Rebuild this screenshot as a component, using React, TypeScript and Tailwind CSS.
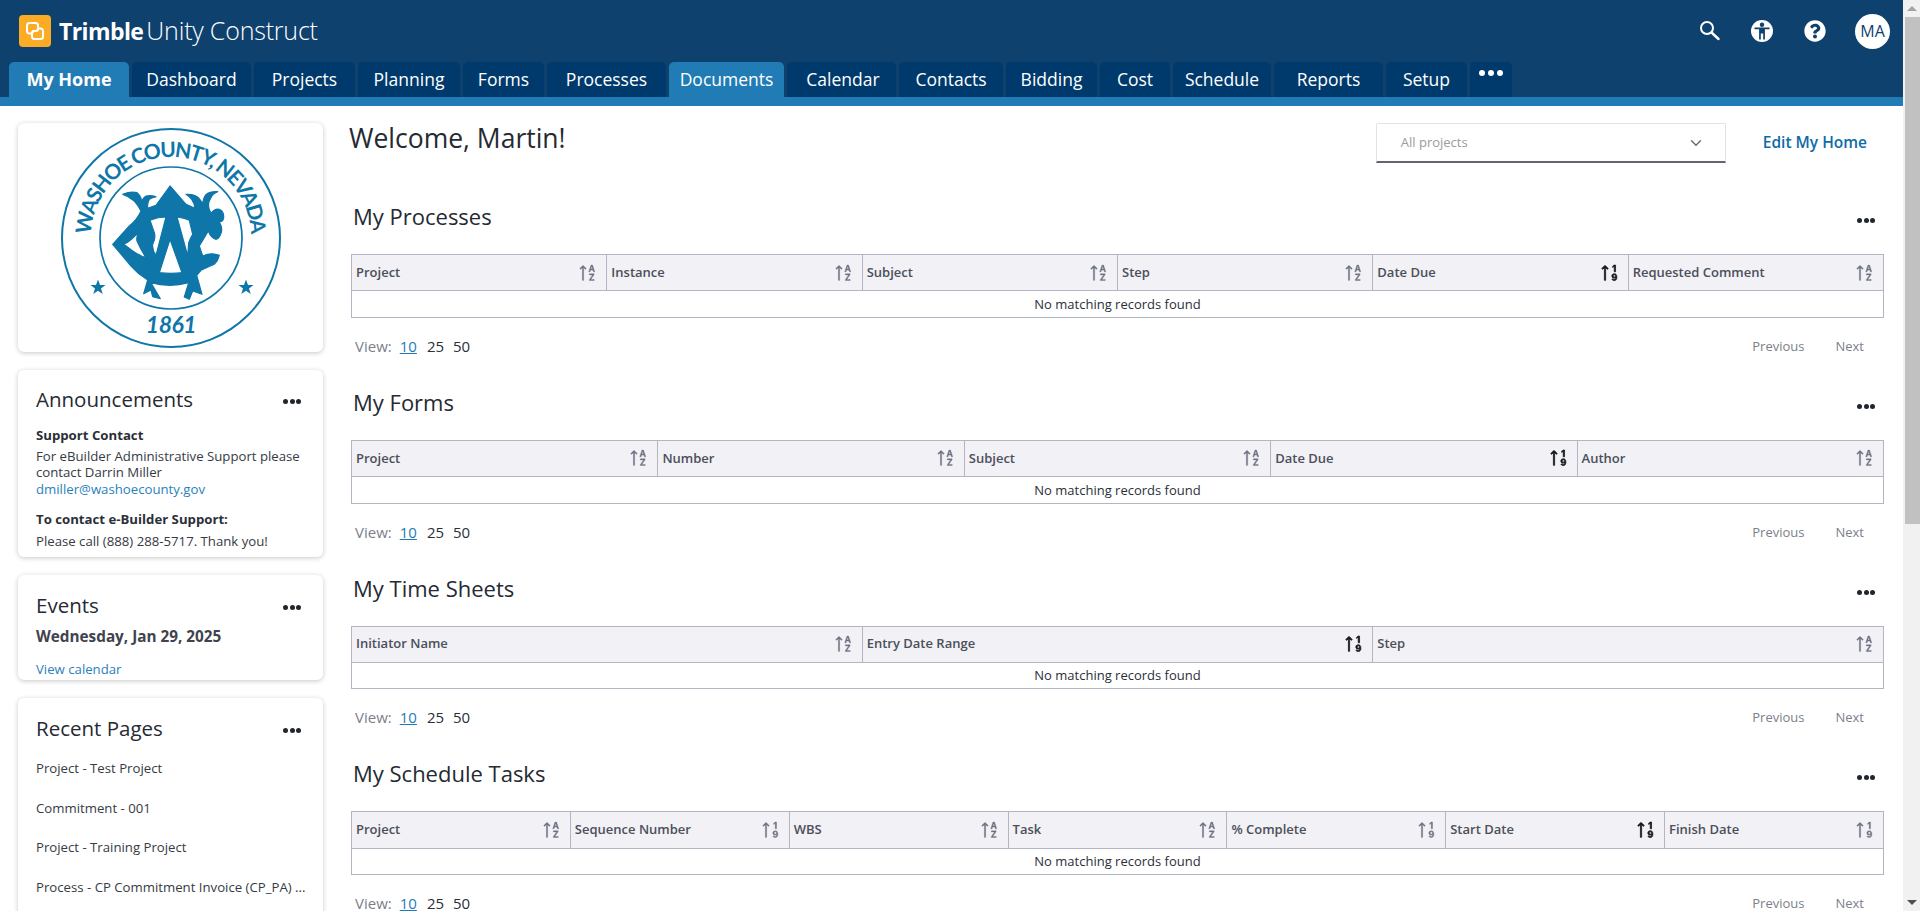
import React from "react";
import { ChevronDown } from "lucide-react";
import { BsSortAlphaUp, BsSortNumericUp } from "react-icons/bs";
import { FaQuestionCircle } from "react-icons/fa";

const tabs = [
  { label: "My Home", w: "w-[120px]", active: "home" },
  { label: "Dashboard", w: "w-[119px]" },
  { label: "Projects", w: "w-[101px]" },
  { label: "Planning", w: "w-[102px]" },
  { label: "Forms", w: "w-[81px]" },
  { label: "Processes", w: "w-[119px]" },
  { label: "Documents", w: "w-[115px]", active: "docs" },
  { label: "Calendar", w: "w-[109px] pl-[3px]" },
  { label: "Contacts", w: "w-[104px]" },
  { label: "Bidding", w: "w-[91px]" },
  { label: "Cost", w: "w-[70px]" },
  { label: "Schedule", w: "w-[98px]" },
  { label: "Reports", w: "w-[109px]" },
  { label: "Setup", w: "w-[81px]" },
];

type Col = { name: string; numeric?: boolean; sorted?: boolean };

const sections: { title: string; cols: Col[] }[] = [
  {
    title: "My Processes",
    cols: [
      { name: "Project" },
      { name: "Instance" },
      { name: "Subject" },
      { name: "Step" },
      { name: "Date Due", numeric: true, sorted: true },
      { name: "Requested Comment" },
    ],
  },
  {
    title: "My Forms",
    cols: [
      { name: "Project" },
      { name: "Number" },
      { name: "Subject" },
      { name: "Date Due", numeric: true, sorted: true },
      { name: "Author" },
    ],
  },
  {
    title: "My Time Sheets",
    cols: [
      { name: "Initiator Name" },
      { name: "Entry Date Range", numeric: true, sorted: true },
      { name: "Step" },
    ],
  },
  {
    title: "My Schedule Tasks",
    cols: [
      { name: "Project" },
      { name: "Sequence Number", numeric: true },
      { name: "WBS" },
      { name: "Task" },
      { name: "% Complete", numeric: true },
      { name: "Start Date", numeric: true, sorted: true },
      { name: "Finish Date", numeric: true },
    ],
  },
];

const recentPages = [
  "Project - Test Project",
  "Commitment - 001",
  "Project - Training Project",
  "Process - CP Commitment Invoice (CP_PA) ...",
];

const Dots = () => (
  <div className="flex gap-[1.5px]">
    <span className="w-[5px] h-[5px] rounded-full bg-[#20252e]" />
    <span className="w-[5px] h-[5px] rounded-full bg-[#20252e]" />
    <span className="w-[5px] h-[5px] rounded-full bg-[#20252e]" />
  </div>
);

const LogoMark = () => (
  <svg width="32" height="32" viewBox="0 0 32 32" className="shrink-0">
    <rect width="32" height="32" rx="4" fill="#fbab24" />
    <path
      d="M13.5 18.5H10.5a2.5 2.5 0 0 1-2.5-2.5V10.5A2.5 2.5 0 0 1 10.5 8h6a2.5 2.5 0 0 1 2.5 2.5V13.5a2.5 2.5 0 0 1-2.5 2.5H15.5a2.5 2.5 0 0 0-2.5 2.5"
      fill="none"
      stroke="#fff"
      strokeWidth="2"
    />
    <path
      d="M18.5 13.5h3a2.5 2.5 0 0 1 2.5 2.5v5.5a2.5 2.5 0 0 1-2.5 2.5h-6a2.5 2.5 0 0 1-2.5-2.5V18.5a2.5 2.5 0 0 1 2.5-2.5h1a2.5 2.5 0 0 0 2.5-2.5"
      fill="none"
      stroke="#fff"
      strokeWidth="2"
    />
  </svg>
);

const SearchIcon = () => (
  <svg width="22" height="22" viewBox="0 0 22 22" fill="none" stroke="#fff">
    <circle cx="9" cy="8" r="6" strokeWidth="2" />
    <path d="M13.5 12.5L20.5 19" strokeWidth="2.4" strokeLinecap="round" />
  </svg>
);

const AccessIcon = () => (
  <svg width="22" height="22" viewBox="0 0 22 22">
    <circle cx="11" cy="11" r="11" fill="#fff" />
    <circle cx="11" cy="4.800" r="2.200" fill="#0f416e" />
    <path
      d="M3.500 7.600h15v1.700h-4.600V19.500h-1.700v-6h-2.400v6H8.100V9.300H3.500z"
      fill="#0f416e"
    />
  </svg>
);

const Seal = () => (
  <svg width="224" height="224" viewBox="-112 -112 224 224">
    <defs>
      <path id="seal-arc" d="M-80 -1A80 80 0 1 1 80 -1" />
    </defs>
    <circle r="109" fill="none" stroke="#0e76a8" strokeWidth="2" />
    <circle r="71" fill="none" stroke="#0e76a8" strokeWidth="1.700" />
    <text fill="#0e76a8" fontFamily="Lato, sans-serif" fontSize="21" fontWeight="700">
      <textPath href="#seal-arc" startOffset="50%" textAnchor="middle" textLength="246">
        WASHOE COUNTY, NEVADA
      </textPath>
    </text>
    <text
      x="0"
      y="95"
      textAnchor="middle"
      fill="#0e76a8"
      fontFamily="Lato, sans-serif"
      fontSize="23"
      fontWeight="700"
      fontStyle="italic"
      letterSpacing="-0.5"
    >
      1861
    </text>
    <path
      fillRule="evenodd"
      fill="#0e76a8"
      stroke="#0e76a8"
      strokeWidth="1.200"
      strokeLinejoin="round"
      d="M-1 -52L15 -33.700L24 -29.700Q23 -39 15 -43.700Q25 -44 28.300 -39.300Q31 -36 31.700 -32.700Q32 -42 36.700 -44.700Q41 -47 46.700 -46.300Q41 -44 40 -40.300Q35 -33 40 -24.700Q44 -30 48.300 -28.700Q53 -27 52.700 -20.300Q52 -16 48.300 -16.300Q52 -10 50 -4.700Q48 1 45 1.300Q40 0 37.300 -7L33.300 -0.300L28.300 8L31.700 18Q40 14 48.300 17.300Q47 23 43.300 26.300Q37 29 30 32.300L25.700 37.300L31 56.300L21.700 53L18.300 61.300L13.300 59L17.700 44.700Q8 47.300 -1 47.300Q-11 47.300 -20 44.700L-10.700 60.700L-18.300 58.700L-20 52L-27.300 55.700L-23.300 42Q-33 36 -40 28L-58.300 6.300L-41.700 -12Q-34 -18 -30 -27Q-33 -33 -36.700 -37Q-42 -42 -48.300 -43.700Q-40 -47 -34 -45.300Q-30 -42 -29.300 -37Q-27 -41 -25 -42Q-20 -43 -15 -41.300Q-20 -40 -21.700 -38.700Q-24 -34 -23.300 -29.700L-15 -32.700Z M-47.300 6.300Q-40 3 -31.700 -7Q-35 -2 -34 3Q-30 12 -25 19.700Q-33 17 -38.300 13Z M-21 -17.700Q-13 -21 -5 -21L-15 17.300Q-19 12 -18.300 6.300Q-15 0 -16.700 -5.300Z M6 -21Q13 -20 18.300 -17.700L21.700 -3.700Q19 1 17.700 4.700L16.700 18Z M-1 1.300L11 34.700Q0 36 -11.700 34.700Z"
    />
    <polygon
      fill="#0e76a8"
      points="-73,41.500 -71,47 -65.500,47 -70,50.500 -68.300,56 -73,52.800 -77.700,56 -76,50.500 -80.500,47 -75,47"
    />
    <polygon
      fill="#0e76a8"
      points="75,41.500 77,47 82.500,47 78,50.500 79.700,56 75,52.800 70.300,56 72,50.500 67.500,47 73,47"
    />
  </svg>
);

const Card = ({ title, className, children }: { title: string; className: string; children: React.ReactNode }) => (
  <div className={`bg-white rounded-md shadow-[0_1px_5px_rgba(0,0,0,0.22)] px-[18px] ${className}`}>
    <div className="flex items-center justify-between h-[26px] pr-[4px]">
      <h3 className="text-[20.500px] leading-[26px] font-medium text-[#252a33]">{title}</h3>
      <div className="mt-[5px]">
        <Dots />
      </div>
    </div>
    {children}
  </div>
);

const Sidebar = () => (
  <aside className="w-[305px] shrink-0 flex flex-col gap-[18px] ml-[18px] pt-[17px]">
    <div className="bg-white rounded-md shadow-[0_1px_5px_rgba(0,0,0,0.22)] h-[229px] shrink-0 flex items-center justify-center">
      <Seal />
    </div>
    <Card title="Announcements" className="h-[187px] shrink-0 pt-[16px] text-[13.200px] leading-[16.500px] text-[#363a45]">
      <p className="font-bold mt-[15px] text-[#2b2f38]">Support Contact</p>
      <p className="mt-[4px]">For eBuilder Administrative Support please contact Darrin Miller</p>
      <a className="block text-[#2a7fba]">dmiller@washoecounty.gov</a>
      <p className="font-bold mt-[14px] text-[#2b2f38]">To contact e-Builder Support:</p>
      <p className="mt-[5px]">Please call (888) 288-5717. Thank you!</p>
    </Card>
    <Card title="Events" className="h-[105px] shrink-0 pt-[17px]">
      <p className="text-[15.300px] leading-[20px] font-bold text-[#3f434e] mt-[8px]">Wednesday, Jan 29, 2025</p>
      <a className="block mt-[15px] text-[13.200px] leading-[16px] text-[#2a7fba]">View calendar</a>
    </Card>
    <Card title="Recent Pages" className="flex-1 pt-[17px]">
      <ul className="mt-[19px] flex flex-col text-[13.200px] leading-[16px] text-[#363a45]">
        {recentPages.map((page) => (
          <li key={page} className="h-[39.500px] whitespace-nowrap">
            {page}
          </li>
        ))}
      </ul>
    </Card>
  </aside>
);

const DataTable = ({ title, cols }: { title: string; cols: Col[] }) => (
  <section>
    <div className="flex justify-between h-[50px] pl-[2px] pr-[9px]">
      <h2 className="text-[22px] leading-[24px] text-[#252a33]">{title}</h2>
      <div className="pt-[14px]">
        <Dots />
      </div>
    </div>
    <table className="w-full table-fixed border-collapse border border-[#b3b5c3]">
      <thead>
        <tr className="h-[36.300px] bg-[#f1f1f6]">
          {cols.map((col) => (
            <th key={col.name} className="border border-[#b3b5c3] p-0 pl-[4px] pr-[8px] text-left font-semibold">
              <div className="flex items-center justify-between text-[13px] text-[#4b4f5a]">
                <span>{col.name}</span>
                {col.numeric ? (
                  <BsSortNumericUp
                    size={20}
                    className={
                      col.sorted
                        ? "text-[#14171c] stroke-current stroke-[0.6]"
                        : "text-[#6d7280] stroke-current stroke-[0.3]"
                    }
                  />
                ) : (
                  <BsSortAlphaUp size={20} className="text-[#6d7280] stroke-current stroke-[0.3]" />
                )}
              </div>
            </th>
          ))}
        </tr>
      </thead>
      <tbody>
        <tr className="h-[26.500px]">
          <td colSpan={cols.length} className="text-center text-[13px] text-[#2b2f38] p-0 pt-[1px]">
            No matching records found
          </td>
        </tr>
      </tbody>
    </table>
    <div className="flex justify-between h-[72px] pt-[19px] pl-[4px] pr-[20px] leading-[18px]">
      <div className="flex text-[15px]">
        <span className="text-[#7b7f8a]">View:</span>
        <a className="ml-[8px] text-[#1f7bb8] underline">10</a>
        <span className="ml-[10px] text-[#2b2f38]">25</span>
        <span className="ml-[9px] text-[#2b2f38]">50</span>
      </div>
      <div className="flex text-[13px] text-[#7b7f8a] gap-[31px]">
        <span>Previous</span>
        <span>Next</span>
      </div>
    </div>
  </section>
);

const App = () => {
  return (
    <div className="flex h-[911px] overflow-hidden bg-white font-['Open_Sans',sans-serif]">
      <div className="flex-1 min-w-0 flex flex-col">
        <header className="bg-[#0f416e] shrink-0">
          <div className="h-[62px] flex items-center justify-between pl-[19px] pr-[13px]">
            <div className="flex items-center gap-[8px] text-white">
              <LogoMark />
              <div className="flex items-baseline gap-[3px]">
                <span className="font-bold text-[23px] -tracking-[0.6px]">Trimble</span>
                <span className="font-light text-[25px] -tracking-[0.2px]">Unity Construct</span>
              </div>
            </div>
            <div className="flex items-center gap-[31px]">
              <SearchIcon />
              <AccessIcon />
              <FaQuestionCircle size={22} className="text-white" />
              <div className="w-[35px] h-[35px] -ml-[2px] rounded-full bg-white flex items-center justify-center text-[16px] font-medium text-[#0f416e]">
                MA
              </div>
            </div>
          </div>
          <nav className="flex gap-[3px] h-[35px] pl-[9px] text-[17.500px] leading-[35px] text-white">
            {tabs.map((tab) => (
              <a
                key={tab.label}
                className={`${tab.w} shrink-0 text-center rounded-t-[5px] ${
                  tab.active ? "bg-[#217cb5]" : "bg-[#003a6c]"
                } ${tab.active === "home" ? "font-bold text-[18px]" : ""}`}
              >
                {tab.label}
              </a>
            ))}
            <div className="w-[42px] h-[35px] shrink-0 rounded-t-[5px] bg-[#003a6c] flex justify-center gap-[3px] pt-[8px]">
              <span className="w-[6px] h-[6px] rounded-full bg-white" />
              <span className="w-[6px] h-[6px] rounded-full bg-white" />
              <span className="w-[6px] h-[6px] rounded-full bg-white" />
            </div>
          </nav>
          <div className="h-[9px] bg-[#217cb5]" />
        </header>

        <div className="flex flex-1 min-h-0 overflow-hidden">
          <Sidebar />
          <main className="flex-1 min-w-0 ml-[26px] pr-[19px] pt-[17px]">
            <div className="flex items-start justify-between h-[81px]">
              <h1 className="text-[26.500px] leading-[30px] text-[#252a33]">Welcome, Martin!</h1>
              <div className="flex items-start">
                <div className="w-[350px] h-[40px] flex items-center justify-between pl-[24px] pr-[20px] pt-[1px] border border-[#e2e2ea] border-b-2 border-b-[#62676f] rounded-t-[2px] text-[13px] text-[#9b9b9b]">
                  <span>All projects</span>
                  <ChevronDown size={18} className="text-[#6b6f78]" />
                </div>
                <a className="ml-[37px] mr-[17px] text-[15.500px] leading-[38px] font-semibold text-[#0e6ba8]">Edit My Home</a>
              </div>
            </div>
            <div className="pl-[2px]">
              {sections.map((s) => (
                <DataTable key={s.title} title={s.title} cols={s.cols} />
              ))}
            </div>
          </main>
        </div>
      </div>

      {/* scrollbar from the browser, drawn since the page itself is clipped */}
      <div className="w-[17px] shrink-0 bg-[#f1f1f1] flex flex-col pl-[2px]">
        <div className="h-[17px] flex items-center justify-center pr-[2px]">
          <div className="w-0 h-0 border-x-[5px] border-x-transparent border-b-[5px] border-b-[#a3a3a3]" />
        </div>
        <div className="h-[507px] bg-[#c1c1c1]" />
        <div className="flex-1" />
        <div className="h-[17px] flex items-center justify-center pr-[2px]">
          <div className="w-0 h-0 border-x-[5px] border-x-transparent border-t-[5px] border-t-[#505050]" />
        </div>
      </div>
    </div>
  );
};

export default App;
